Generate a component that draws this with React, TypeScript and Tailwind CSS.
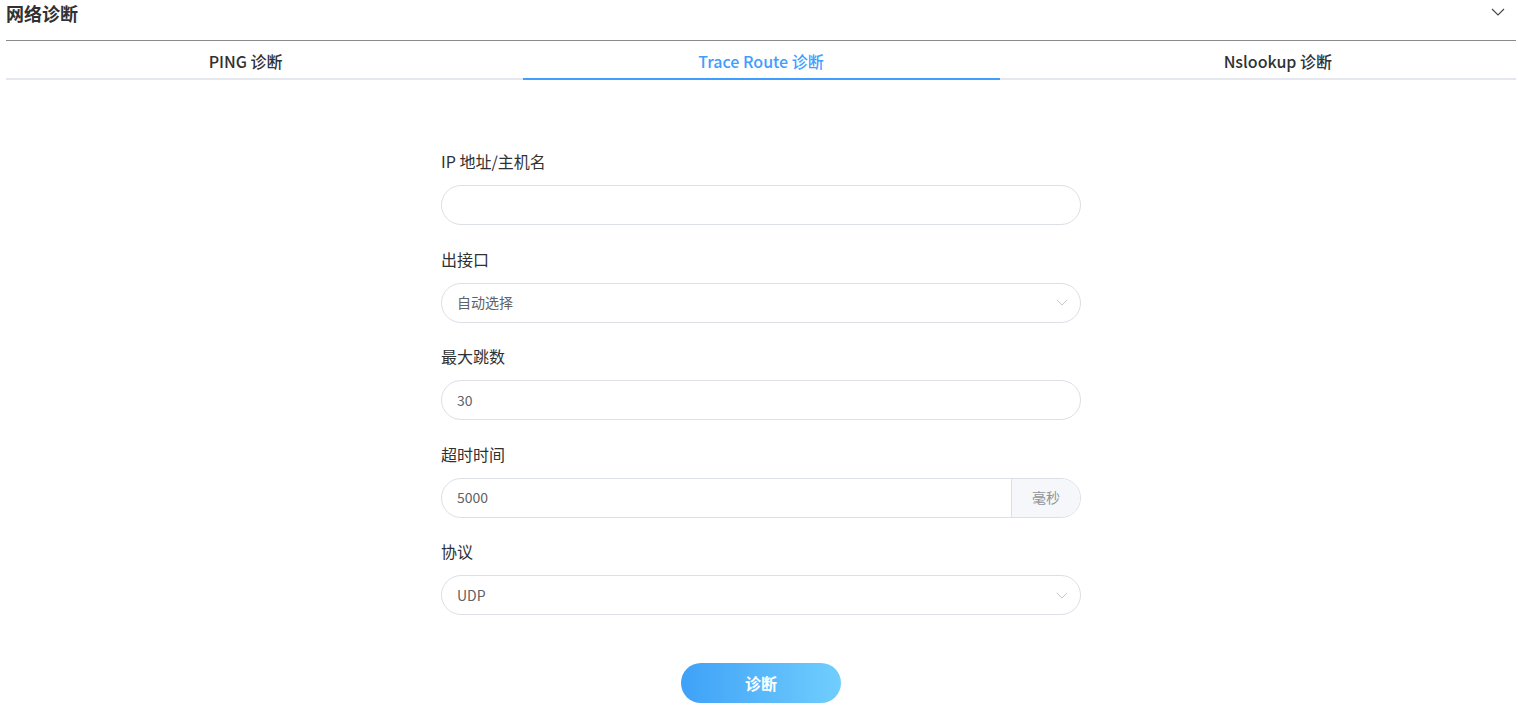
const tabs = ["PING 诊断", "Trace Route 诊断", "Nslookup 诊断"];

function Chevron({ className }: { className: string }) {
  return (
    <svg viewBox="0 0 14 8" fill="none" stroke="currentColor" strokeWidth="1.1" className={className}>
      <polyline points="1,1 7,7 13,1" />
    </svg>
  );
}

function Label({ text }: { text: string }) {
  return (
    <div className="h-[22px] mb-[11px] text-[16px] leading-[18px] text-[#303133]">{text}</div>
  );
}

function TextInput({ value }: { value: string }) {
  return (
    <div className="h-10 rounded-full border border-[#dcdfe6] bg-white px-[15px] flex items-center text-[14px] text-[#606266]">
      {value}
    </div>
  );
}

function SelectBox({ value }: { value: string }) {
  return (
    <div className="h-10 rounded-full border border-[#dcdfe6] bg-white pl-[15px] pr-[12px] flex items-center justify-between text-[14px] text-[#606266]">
      <span>{value}</span>
      <Chevron className="w-[12px] h-[7px] text-[#c0c4cc]" />
    </div>
  );
}

export default function App() {
  const active = 1;

  return (
    <div className="w-full h-screen bg-white overflow-hidden font-['Noto_Sans_CJK_SC','Noto_Sans',sans-serif]">
      <div className="ml-[6px] mr-[2px]">
        {/* header */}
        <div className="h-[41px] border-b border-[#8a8a8a] flex items-start justify-between">
          <div className="text-[18px] font-bold text-[#303133] leading-[24px] mt-[1px]">网络诊断</div>
          <Chevron className="w-[14px] h-[8px] mt-[8px] mr-[11px] text-[#444]" />
        </div>

        {/* tabs */}
        <div className="grid grid-cols-3 border-b-2 border-[#e4e7ed]">
          {tabs.map((t, i) => (
            <div
              key={t}
              className={`relative h-[37px] pt-[3px] flex items-center justify-center text-[16px] font-medium ${
                i === 0 ? "pr-[24px]" : i === 2 ? "pl-[27px]" : ""
              } ${i === active ? "text-[#409eff]" : "text-[#303133]"}`}
            >
              {t}
              {i === active && (
                <div className="absolute left-[14px] right-[13px] -bottom-[2px] h-[2px] bg-[#409eff]" />
              )}
            </div>
          ))}
        </div>

        {/* form */}
        <div className="w-[640px] mx-auto mt-[72px]">
          <div className="mb-[24.5px]">
            <Label text="IP 地址/主机名" />
            <TextInput value="" />
          </div>
          <div className="mb-[24.5px]">
            <Label text="出接口" />
            <SelectBox value="自动选择" />
          </div>
          <div className="mb-[24.5px]">
            <Label text="最大跳数" />
            <TextInput value="30" />
          </div>
          <div className="mb-[24.5px]">
            <Label text="超时时间" />
            <div className="h-10 rounded-full border border-[#dcdfe6] flex overflow-hidden">
              <div className="flex-1 px-[15px] flex items-center text-[14px] text-[#606266]">5000</div>
              <div className="w-[69px] bg-[#f5f7fa] border-l border-[#dcdfe6] flex items-center justify-center text-[14px] text-[#909399]">
                毫秒
              </div>
            </div>
          </div>
          <div>
            <Label text="协议" />
            <SelectBox value="UDP" />
          </div>

          <div className="flex justify-center mt-[48px]">
            <button className="w-[160px] h-10 rounded-full bg-gradient-to-r from-[#3ea1f7] to-[#70cefd] text-white text-[16px] font-bold">
              诊断
            </button>
          </div>
        </div>
      </div>
    </div>
  );
}
